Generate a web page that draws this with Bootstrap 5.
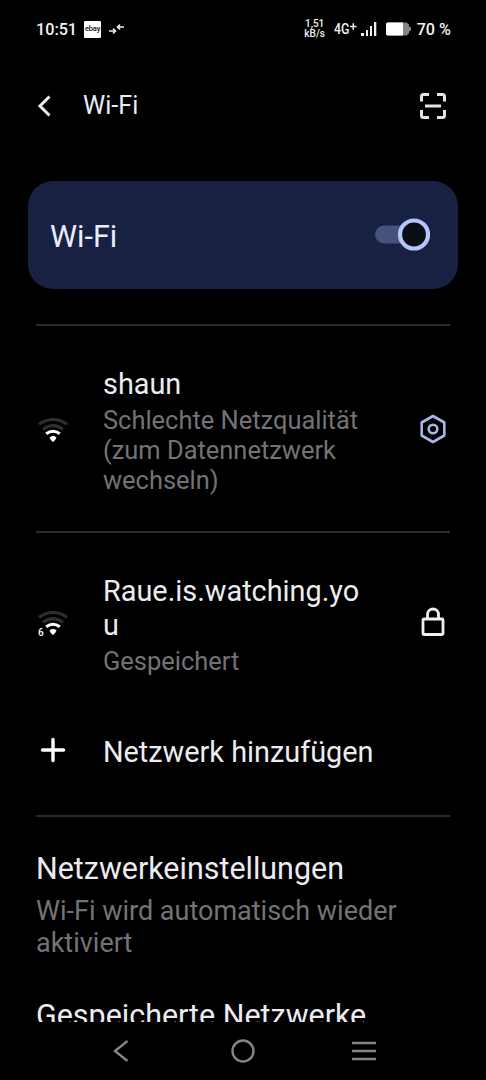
<!DOCTYPE html>
<html lang="de">
<head>
<meta charset="utf-8">
<meta name="viewport" content="width=device-width, initial-scale=1">
<title>Wi-Fi</title>
<link href="https://cdn.jsdelivr.net/npm/bootstrap@5.3.0/dist/css/bootstrap.min.css" rel="stylesheet">
<style>
body{background:#000;color:#ececf0;font-family:Roboto,sans-serif;height:1080px;overflow:hidden}
svg{display:block;flex:none}
.status{height:58px;padding:0 35px 0 36px;color:#f2f2f2;font-weight:500;font-size:16.2px;line-height:20px}
.clock{padding-top:2px}
.rate{font-size:10px;line-height:10.5px;font-weight:500;width:22px}
.ebay{width:17px;height:17px;background:#fff;color:#111;font-size:7.5px;font-weight:500;line-height:15px;letter-spacing:-.2px;border-radius:1px;margin-left:7px}
.topbar{height:95px;padding:0 40px 0 37px}
.topbar h1{font-size:25px;font-weight:400;line-height:30px;letter-spacing:.05px}
.wifi-card{margin:28px 28px 35px;height:108px;border-radius:25px;background:#182142;color:#e9eefc;padding:0 28px 0 22px;border:0}
.wifi-card span{font-size:30.5px;line-height:36px;padding-top:3px}
.rule{height:2px;margin:0 36px;background:#2b2b2d;flex:none}
.net{padding:0 40px 0 37px}
.ico{width:66px;flex:none}
.name{font-size:28.85px;line-height:34px}
.note{font-size:25.45px;line-height:30px;color:#737377}
.netinfo{width:262px;flex:none}
.first{height:205px}
.second{height:201px;padding-top:41px}
.adder{height:81px}
.setting{padding:0 36px}
.setting .name{font-size:30.45px}
.setting .note{font-size:27px;line-height:31.5px}
.navigate{height:58px}
</style>
</head>
<body class="d-flex flex-column">
<header class="status d-flex align-items-center flex-shrink-0">
  <span class="clock">10:51</span>
  <span class="ebay text-center">ebay</span>
  <svg class="ms-2" width="16" height="14" viewBox="0 0 16 14" fill="none" stroke="#eee" stroke-width="1.600"><path d="M0 9H6M4 6.500L6.500 9L4 11.500M15 5H8.500M11 2.500L8.500 5L11 7.500"/></svg>
  <div class="rate text-center ms-auto">1,51<br>kB/s</div>
  <svg style="margin-left:8px" width="23" height="16" viewBox="0 0 23 16"><text x="0" y="13" fill="#f2f2f2" font-family="Roboto" font-size="14" font-weight="500" textLength="15.500" lengthAdjust="spacingAndGlyphs">4G</text><path d="M16 5.500H22.500M19.250 2.200V8.800" stroke="#f2f2f2" stroke-width="1.500"/></svg>
  <svg style="margin-left:4px" width="16" height="15" viewBox="0 0 16 15" fill="#eee"><path d="M0 11h3v3H0zM5 8h2v6H5zM9 4h2v10H9zM13 0h2.300v14H13z"/></svg>
  <svg style="margin-left:9px" width="26" height="14" viewBox="0 0 26 14"><path d="M2 .5H20.500L23 2.500V4.500L25 5.500V8.500L23 9.500V11.500L20.500 13.500H2Q0 13.500 0 11.500V2.500Q0 .5 2 .5" fill="#858585"/><path d="M2 .5H17V13.500H2Q0 13.500 0 11.500V2.500Q0 .5 2 .5" fill="#fff"/></svg>
  <span class="clock" style="margin-left:5px">70 %</span>
</header>
<nav class="topbar d-flex align-items-center flex-shrink-0">
  <svg width="14" height="22" viewBox="0 0 14 22" fill="none" stroke="#ececec" stroke-width="3"><path d="M12.500 1.500L3 11L12.500 20.500"/></svg>
  <h1 class="mb-0" style="margin-left:32px">Wi-Fi</h1>
  <svg class="ms-auto" width="26" height="26" viewBox="0 0 26 26" fill="none" stroke="#e4e4e4" stroke-width="3"><path d="M1.500 8.500V3.500Q1.500 1.500 3.500 1.500H9M17 1.500H22.500Q24.500 1.500 24.500 3.500V8.500M24.500 17V22.500Q24.500 24.500 22.500 24.500H17M9 24.500H3.500Q1.500 24.500 1.500 22.500V17M5 13H21"/></svg>
</nav>
<section class="wifi-card d-flex align-items-center justify-content-between flex-shrink-0">
  <span>Wi-Fi</span>
  <svg width="56" height="34" viewBox="0 0 56 34"><rect x="1" y="7.500" width="42" height="18" rx="9" fill="#46527c"/><circle cx="40" cy="16.500" r="14" fill="#0c0e16" stroke="#b5c6fb" stroke-width="4.200"/></svg>
</section>
<div class="rule"></div>
<section class="net first d-flex align-items-center flex-shrink-0">
  <div class="ico pt-1"><svg width="32" height="26" viewBox="0 0 32 26" fill="none"><path d="M2 6.300Q16 -3.200 30 6.300" stroke="#303030" stroke-width="3"/><path d="M6 11.200Q16 4 26 11.200" stroke="#303030" stroke-width="3"/><path d="M9.200 15.800Q16 10.700 22.800 15.800" stroke="#fff" stroke-width="3"/><path d="M12.500 19.500Q16 16.700 19.500 19.500Q19 21.500 16 24Q13 21.500 12.500 19.500" fill="#fff"/></svg></div>
  <div class="netinfo" style="padding-top:5px"><div class="name">shaun</div><div class="note" style="margin-top:4px">Schlechte Netzqualität (zum Datennetzwerk wechseln)</div></div>
  <svg class="ms-auto" width="26" height="30" viewBox="0 0 26 30" fill="none" stroke="#a9b4e8" stroke-width="2.600"><path d="M13 2L24.300 8.500V21.500L13 28L1.700 21.500V8.500Z" stroke-linejoin="round"/><circle cx="13" cy="15" r="4.300"/></svg>
</section>
<div class="rule"></div>
<section class="net second d-flex flex-shrink-0">
  <div class="ico" style="padding-top:37px"><svg width="32" height="26" viewBox="0 0 32 26" fill="none"><path d="M2 6.300Q16 -3.200 30 6.300" stroke="#303030" stroke-width="3"/><path d="M6 11.200Q16 4 26 11.200" stroke="#303030" stroke-width="3"/><path d="M9.200 15.800Q16 10.700 22.800 15.800" stroke="#fff" stroke-width="3"/><path d="M12.500 19.500Q16 16.700 19.500 19.500Q19 21.500 16 24Q13 21.500 12.500 19.500" fill="#fff"/><text x="1" y="24.500" font-family="Roboto" font-size="10" font-weight="500" fill="#fff">6</text></svg></div>
  <div class="netinfo"><div class="name">Raue.is.watching.yo<br>u</div><div class="note" style="margin-top:4px">Gespeichert</div></div>
  <svg class="ms-auto" style="margin-top:33px" width="26" height="30" viewBox="0 0 26 30" fill="none" stroke="#f0f0f0" stroke-width="2.800"><rect x="3" y="12" width="20" height="15.500" rx="1"/><path d="M7.500 12V7.500A5.500 5.500 0 0 1 18.500 7.500V12"/></svg>
</section>
<section class="net adder d-flex flex-shrink-0">
  <div class="ico"><svg style="margin-top:2px" width="32" height="28" viewBox="0 0 32 28" stroke="#fff" stroke-width="3.400" stroke-linecap="round"><path d="M5.500 14H26.500M16 3.500V24.500"/></svg></div>
  <div class="name text-nowrap" style="padding-top:1px">Netzwerk hinzufügen</div>
</section>
<div class="rule"></div>
<main class="setting flex-grow-1 overflow-hidden" style="min-height:0;padding-top:35px">
  <div class="name">Netzwerkeinstellungen</div>
  <div class="note" style="margin-top:10px">Wi-Fi wird automatisch wieder aktiviert</div>
  <div class="name" style="margin-top:40px">Gespeicherte Netzwerke</div>
</main>
<footer class="navigate d-flex align-items-center flex-shrink-0">
  <svg style="margin-left:112px" width="17" height="22" viewBox="0 0 17 22" fill="none" stroke="#858585" stroke-width="2.400"><path d="M15.500 1L3 11L15.500 21"/></svg>
  <svg style="margin-left:102px" width="24" height="24" viewBox="0 0 24 24" fill="none" stroke="#858585" stroke-width="2.400"><circle cx="12" cy="12" r="10.500"/></svg>
  <svg style="margin-left:97px" width="24" height="20" viewBox="0 0 24 20" stroke="#858585" stroke-width="2.600"><path d="M0 2H24M0 10H24M0 18H24"/></svg>
</footer>
<script src="https://cdn.jsdelivr.net/npm/bootstrap@5.3.0/dist/js/bootstrap.bundle.min.js"></script>
</body>
</html>
